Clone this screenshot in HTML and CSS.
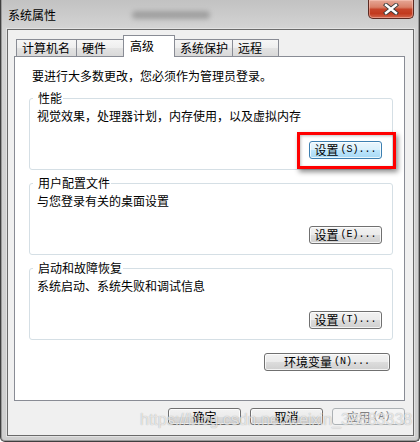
FILE: index.html
```html
<!DOCTYPE html>
<html lang="zh-CN">
<head>
<meta charset="utf-8">
<title>系统属性</title>
<link rel="stylesheet" href="styles.css">
</head>
<body>
<div class="window">
  <div class="titlebar">
    <span class="title">系统属性</span>
    <span class="title-blur"></span>
    <div class="close">
      <svg width="16" height="12" viewBox="0 0 16 12">
        <path d="M3 2 L13 10 M13 2 L3 10" stroke="#3a3a3a" stroke-width="4.2" stroke-linecap="square" fill="none"/>
        <path d="M3 2 L13 10 M13 2 L3 10" stroke="#ffffff" stroke-width="2.4" stroke-linecap="square" fill="none"/>
      </svg>
    </div>
  </div>
  <div class="client">
    <div class="tabs">
      <div class="tab t1">计算机名</div>
      <div class="tab t2">硬件</div>
      <div class="tab t3 active">高级</div>
      <div class="tab t4">系统保护</div>
      <div class="tab t5">远程</div>
    </div>
    <div class="panel">
      <p class="note">要进行大多数更改，您必须作为管理员登录。</p>
      <fieldset class="group">
        <legend>性能</legend>
        <p class="desc">视觉效果，处理器计划，内存使用，以及虚拟内存</p>
        <div class="row"><button class="btn default">设置<span class="m">(S)...</span></button></div>
      </fieldset>
      <fieldset class="group">
        <legend>用户配置文件</legend>
        <p class="desc">与您登录有关的桌面设置</p>
        <div class="row"><button class="btn">设置<span class="m">(E)...</span></button></div>
      </fieldset>
      <fieldset class="group">
        <legend>启动和故障恢复</legend>
        <p class="desc">系统启动、系统失败和调试信息</p>
        <div class="row"><button class="btn">设置<span class="m">(T)...</span></button></div>
      </fieldset>
      <div class="row env"><button class="btn wide">环境变量<span class="m">(N)...</span></button></div>
    </div>
    <div class="actions">
      <button class="btn">确定</button>
      <button class="btn">取消</button>
      <button class="btn" disabled>应用<span class="m">(A)</span></button>
    </div>
  </div>
  <div class="highlight"></div>
  <div class="watermark">https://blog.csdn.net/weixin_38883338</div>
</div>
</body>
</html>
```
FILE: styles.css
```css
html, body {
  margin: 0;
  padding: 0;
}
body {
  width: 420px;
  height: 442px;
  overflow: hidden;
  background: #ffffff;
  font-family: "Noto Sans CJK SC", sans-serif;
  font-size: 12px;
  color: #000;
}
.window {
  position: relative;
  width: 420px;
  height: 442px;
  box-sizing: border-box;
  background: linear-gradient(180deg, #c2c2c2 0px, #d3d3d3 28px, #cfcfcf 100%);
  border: 1px solid #3f3f3f;
  border-top: none;
  border-radius: 0 0 5px 5px;
  box-shadow: inset 1px 0 0 #9a9a9a, inset -1px 0 0 #9a9a9a, inset 0 -1px 0 #9a9a9a;
  display: flex;
  flex-direction: column;
}
.titlebar {
  height: 29px;
  display: flex;
  align-items: flex-start;
  padding-left: 7px;
  flex: none;
}
.title {
  margin-top: 8px;
  line-height: 14px;
  font-size: 12px;
  color: #000;
}
.title-blur {
  width: 78px;
  height: 8px;
  margin: 11px 0 0 76px;
  background: #7c7c7c;
  border-radius: 4px;
  filter: blur(2.5px);
  opacity: 0.55;
}
.close {
  margin-left: auto;
  margin-right: 5px;
  width: 46px;
  height: 19px;
  box-sizing: border-box;
  border: 1px solid #5b2a22;
  border-top: none;
  border-radius: 0 0 5px 5px;
  background: linear-gradient(180deg, #e6a796 0%, #d98068 40%, #c6442a 52%, #c23a1e 75%, #d2664c 100%);
  box-shadow: inset 0 0 0 1px rgba(255, 210, 200, 0.45);
  display: flex;
  align-items: center;
  justify-content: center;
}
.client {
  flex: 1;
  margin: 0 5px 5px 6px;
  background: #f0f0f0;
  border: 1px solid #6a6a6a;
  box-shadow: 0 0 0 1px #e2e2e2;
  display: flex;
  flex-direction: column;
}
.tabs {
  position: relative;
  z-index: 1;
  height: 26px;
  display: flex;
  align-items: flex-end;
  padding-left: 8px;
  flex: none;
}
.tab {
  height: 17px;
  box-sizing: border-box;
  border: 1px solid #898c95;
  border-bottom: none;
  background: linear-gradient(180deg, #f6f6f6 0%, #eeeeee 50%, #e3e3e3 50%, #d9d9d9 100%);
  line-height: 15px;
  padding-left: 5px;
  white-space: nowrap;
  margin-left: -1px;
}
.t1 { width: 61px; margin-left: 0; }
.t2 { width: 50px; }
.t3 { width: 52px; margin-left: -3px; }
.t4 { width: 61px; margin-left: -3px; padding-left: 7px; }
.t5 { width: 47px; }
.tab.active {
  position: relative;
  z-index: 2;
  height: 22px;
  margin-bottom: -1px;
  background: #ffffff;
  padding-left: 6px;
  line-height: 20px;
}
.panel {
  height: 345px;
  box-sizing: border-box;
  margin: 0 8px 0 6px;
  background: #ffffff;
  border: 1px solid #898c95;
  padding-top: 12px;
  flex: none;
}
.note {
  margin: 0 0 0 17px;
  line-height: 14px;
}
.group {
  margin: 6px 11px 0 14px;
  padding: 4px 10px 10px 7px;
  border: 1px solid #d5dfe5;
  border-radius: 3px;
  min-width: 0;
}
.group:first-of-type {
  margin-top: 8px;
}
.group legend {
  line-height: 14px;
  padding: 0 1px 0 5px;
  margin-left: -4px;
}
.desc {
  margin: 0;
  line-height: 14px;
}
.row {
  display: flex;
  justify-content: flex-end;
  margin-top: 18px;
}
.btn {
  width: 73px;
  height: 18px;
  box-sizing: border-box;
  padding: 0;
  border: 1px solid #707070;
  border-radius: 3px;
  background: linear-gradient(180deg, #f2f2f2 0%, #ebebeb 50%, #dddddd 50%, #cfcfcf 100%);
  box-shadow: inset 0 0 0 1px rgba(255, 255, 255, 0.75);
  font-family: "Noto Sans CJK SC", sans-serif;
  font-size: 12px;
  line-height: 14px;
  color: #000;
  display: flex;
  align-items: center;
  justify-content: center;
}
.btn .m {
  font-family: "Liberation Mono", monospace;
  font-size: 10px;
  margin-left: 2px;
}
.btn.default {
  border-color: #3c7fb1;
  background: linear-gradient(180deg, #eaf6fd 0%, #d9f0fc 50%, #bee6fd 50%, #a7d9f5 100%);
}
.btn.wide {
  width: 126px;
}
.env {
  margin: 13px 14px 0 0;
}
.actions {
  display: flex;
  justify-content: flex-end;
  gap: 9px;
  padding-right: 8px;
  margin-top: 7px;
}
.actions .btn {
  height: 17px;
}
.btn:disabled {
  border-color: #adb2b5;
  background: #f4f4f4;
  box-shadow: none;
  color: #838383;
}
.highlight {
  position: absolute;
  left: 296px;
  top: 132px;
  width: 99px;
  height: 37px;
  box-sizing: border-box;
  border: 3px solid #ff0000;
  box-shadow: 2px 3px 5px rgba(0, 0, 0, 0.45), inset 1px 1px 3px rgba(0, 0, 0, 0.25);
  z-index: 5;
}
.watermark {
  position: absolute;
  left: 139px;
  top: 410px;
  font-family: "Liberation Sans", sans-serif;
  font-size: 16px;
  line-height: 20px;
  color: rgba(255, 255, 255, 0.7);
  text-shadow: 0 0 1px rgba(0, 0, 0, 0.35);
  white-space: nowrap;
  z-index: 6;
}
```
